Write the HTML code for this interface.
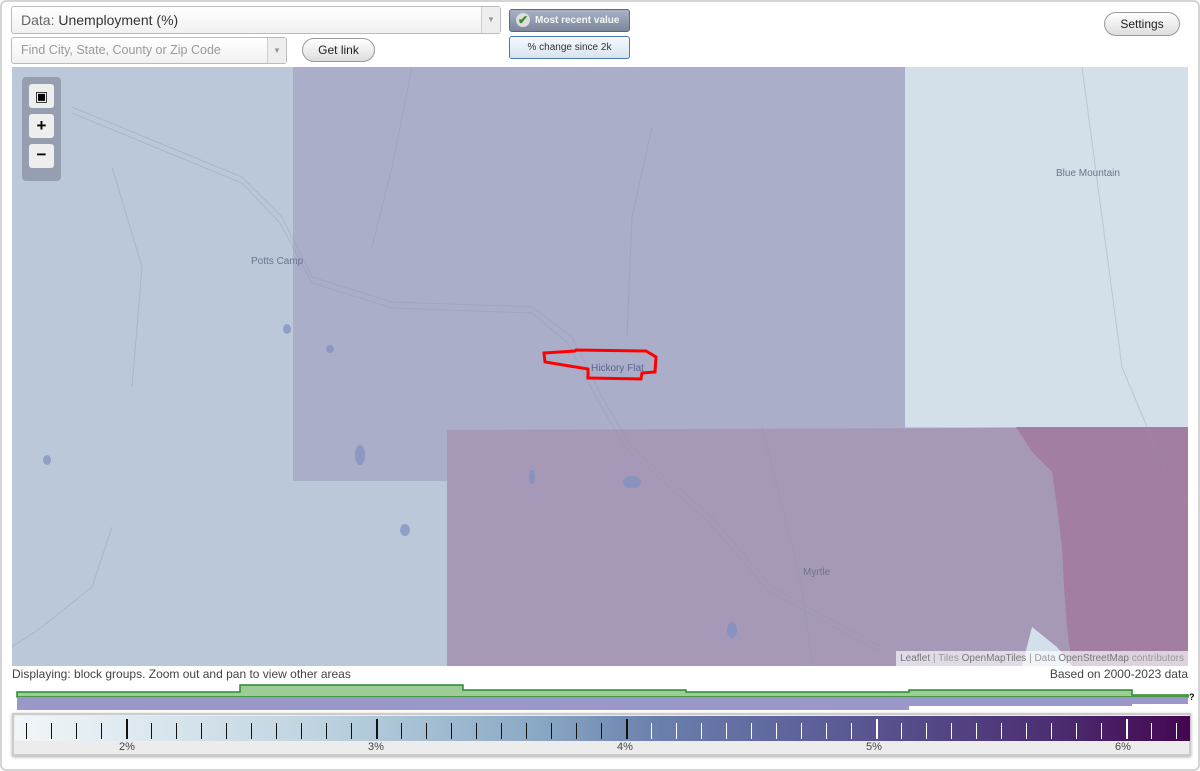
<!DOCTYPE html>
<html><head><meta charset="utf-8"><style>
*{box-sizing:border-box}
body{margin:0;width:1200px;height:771px;background:#fff;font-family:"Liberation Sans",Arial,sans-serif;position:relative;overflow:hidden}
.frame{position:absolute;left:0;top:0;width:1200px;height:771px;border:2px solid #d4d4d4;border-radius:6px}
.sel{position:absolute;background:linear-gradient(#fff,#f1f1f1);border:1px solid #bbb;border-radius:3px;font-size:14px;color:#666}
.sel .arr{position:absolute;right:0;top:0;bottom:0;width:19px;border-left:1px solid #ccc;background:#eee;color:#999;font-size:8px;text-align:center}
.btn{position:absolute;border:1px solid #999;border-radius:12px;background:linear-gradient(#fff,#ddd);font-size:12px;text-align:center;color:#222}
.map{position:absolute;left:12px;top:67px;width:1176px;height:599px;overflow:hidden;background:#bac8da}
.tick{position:absolute;top:7px;width:1px;height:16px}
.lab{position:absolute;width:40px;margin-left:-20px;text-align:center}
</style></head><body>
<div class="frame"></div>
<div class="sel" style="left:11px;top:6px;width:490px;height:28px;line-height:26px;padding-left:9px"><span style="color:#666">Data: </span><span style="color:#333">Unemployment (%)</span><div class="arr" style="line-height:26px">▼</div></div>
<div class="sel" style="left:11px;top:37px;width:276px;height:27px;line-height:25px;padding-left:9px;font-size:12.5px;color:#999">Find City, State, County or Zip Code<div class="arr" style="line-height:25px">▼</div></div>
<div class="btn" style="left:302px;top:38px;width:73px;height:24px;line-height:22px">Get link</div>
<div style="position:absolute;left:509px;top:9px;width:121px;height:23px;border:1px solid #4a6aa0;border-radius:3px;background:linear-gradient(#a8b2c4,#7d879c);color:#f4f4f4;font-size:10px;font-weight:bold;line-height:21px;padding-left:25px">Most recent value<span style="position:absolute;left:6px;top:3px;width:14px;height:14px;border-radius:50%;background:#ddd;color:#3a8a2a;font-size:12px;line-height:14px;text-align:center">✔</span></div>
<div style="position:absolute;left:509px;top:36px;width:121px;height:23px;border:1px solid #4a7ab0;border-radius:3px;background:linear-gradient(#f4f8fc,#d8e4f0);color:#333;font-size:10px;line-height:21px;text-align:center">% change since 2k</div>
<div class="btn" style="left:1104px;top:12px;width:76px;height:24px;line-height:22px">Settings</div>

<div class="map">
<svg width="1176" height="599" style="position:absolute;left:0;top:0">
<rect x="281" y="0" width="612" height="414" fill="#abaec9"/>
<rect x="893" y="0" width="283" height="360" fill="#d3e0ea"/>
<polygon points="435,363 1176,360 1176,599 435,599" fill="#a699b8"/>
<path d="M1004,360 L1176,360 L1176,599 L1060,599 L1055,560 L1052,520 L1050,480 L1045,440 L1040,405 L1030,395 L1020,385 Z" fill="#a27fa2"/>
<path d="M1010,599 L1020,560 L1045,580 L1060,599 Z" fill="#d3e0ea"/>
<g fill="none" stroke="#8e93b3" stroke-width="1" opacity=".35">
<path d="M60,40 L230,110 L270,150 L300,210 L380,235 L520,240 L560,270 L590,330 L620,380 L700,450 L760,520 L870,580"/>
<path d="M60,46 L230,116 L268,156 L300,216 L380,241 L520,246 L556,276 L586,334 L616,384 L696,454 L756,524 L866,584"/>
<path d="M400,0 L380,100 L360,180"/><path d="M640,60 L620,150 L615,270"/>
<path d="M120,320 L130,200 L100,100"/><path d="M750,360 L790,520 L800,599"/>
<path d="M1070,0 L1090,150 L1110,300 L1160,420 L1176,440"/>
<path d="M100,460 L80,520 L30,560 L0,580"/>
</g>
<g fill="#7d8fc0" opacity=".7"><ellipse cx="318" cy="282" rx="4" ry="4"/><ellipse cx="348" cy="388" rx="5" ry="10"/><ellipse cx="620" cy="415" rx="9" ry="6"/><ellipse cx="520" cy="410" rx="3" ry="7"/><ellipse cx="393" cy="463" rx="5" ry="6"/><ellipse cx="720" cy="563" rx="5" ry="8"/><ellipse cx="35" cy="393" rx="4" ry="5"/><ellipse cx="275" cy="262" rx="4" ry="5"/></g>
<polygon points="532,286 563,284 564,283 634,284 644,290 643,305 630,306 629,312 576,311 576,302 533,295" fill="none" stroke="#f00" stroke-width="3"/>
<g font-size="10" fill="#6a7390" font-family="Liberation Sans,sans-serif"><text x="239" y="197">Potts Camp</text><text x="579" y="304" fill="#5c6590">Hickory Flat</text><text x="1044" y="109">Blue Mountain</text><text x="791" y="508">Myrtle</text></g>
</svg>
<div style="position:absolute;left:10px;top:10px;width:39px;height:104px;background:rgba(120,125,140,.55);border-radius:4px"></div>
<div style="position:absolute;left:17px;top:17px;width:25px;height:24px;background:#eee;border-radius:3px;text-align:center;font-size:14px;line-height:24px">▣</div>
<div style="position:absolute;left:17px;top:47px;width:25px;height:24px;background:#eee;border-radius:3px;text-align:center;font-weight:bold;font-size:17px;line-height:23px">+</div>
<div style="position:absolute;left:17px;top:77px;width:25px;height:24px;background:#eee;border-radius:3px;text-align:center;font-weight:bold;font-size:17px;line-height:22px">−</div>
<div style="position:absolute;right:0;bottom:0;height:15px;padding:0 4px;background:rgba(255,255,255,.65);font-size:10px;color:#999;line-height:15px"><span style="color:#777">Leaflet</span> | Tiles <span style="color:#777">OpenMapTiles</span> | Data <span style="color:#777">OpenStreetMap</span> contributors</div>
</div>

<div style="position:absolute;left:12px;top:667px;font-size:12px;color:#444">Displaying: block groups. Zoom out and pan to view other areas</div>
<div style="position:absolute;right:12px;top:667px;font-size:12px;color:#444">Based on 2000-2023 data</div>

<svg width="1200" height="30" style="position:absolute;left:0;top:683px">
<polygon points="17,9 240,9 240,2 463,2 463,7 686,7 686,9 909,9 909,7 1132,7 1132,12 1188,12 1188,14 17,14" fill="#9dcc98" stroke="#2a8a2a" stroke-width="1.5"/>
<rect x="17" y="14" width="892" height="13" fill="#9a98c8"/>
<rect x="909" y="14" width="223" height="9" fill="#9a98c8"/>
<rect x="1132" y="14" width="56" height="7" fill="#9a98c8"/>
<text x="1189" y="17" font-size="9" font-weight="bold" font-family="Liberation Sans">?</text>
</svg>

<div style="position:absolute;left:12px;top:713px;width:1179px;height:43px;border:2px solid #ccc;background:#ececec;box-shadow:0 1px 3px #aaa">
<div style="position:absolute;left:1px;top:1px;width:1175px;height:25px;background:linear-gradient(90deg,#f1f6f9,#c0d5e1 25%,#88a7c4 45%,#6a7eab 55%,#5b5b96 70%,#4c2f72 88%,#440650)">
<div id="t"></div>
</div>
<div style="position:absolute;top:26px;left:0;width:1175px;font-size:11px;color:#444">
<span class="lab" style="left:113px">2%</span><span class="lab" style="left:362px">3%</span><span class="lab" style="left:611px">4%</span><span class="lab" style="left:860px">5%</span><span class="lab" style="left:1109px">6%</span></div>
</div>
<script>
var h='';for(var x=11;x<1175;x+=25){var i=Math.round((x-111)/25);var maj=(i%10===0);var c=x<620?'#111':'#fff';h+='<div class="tick" style="left:'+x+'px;background:'+c+';'+(maj?'top:3px;height:20px;width:2px':'')+'"></div>'}document.getElementById('t').innerHTML=h;
</script>
</body></html>
